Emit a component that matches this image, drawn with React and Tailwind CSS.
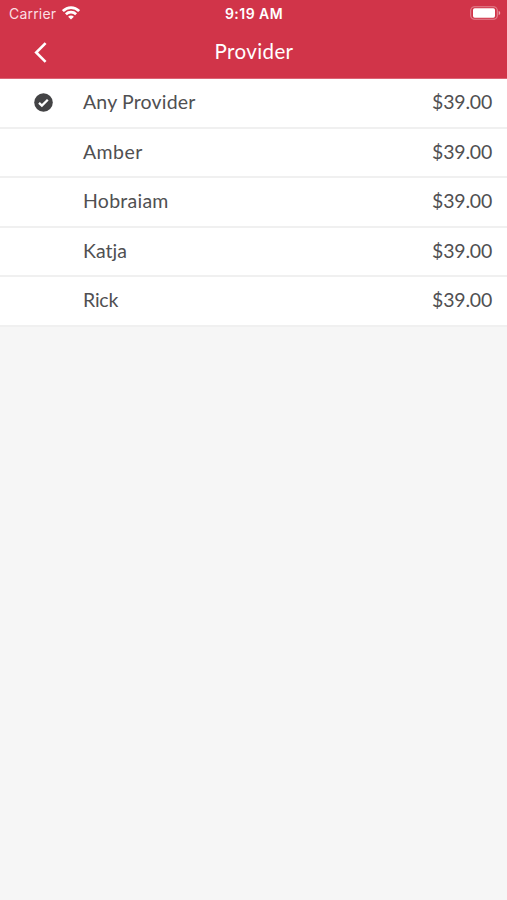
const providers = [
  { name: 'Any Provider', price: '$39.00', selected: true, spacing: 'tracking-[0.17px]' },
  { name: 'Amber', price: '$39.00', spacing: 'tracking-[0.45px]' },
  { name: 'Hobraiam', price: '$39.00', spacing: 'tracking-[0.25px]' },
  { name: 'Katja', price: '$39.00', spacing: 'tracking-[0.05px]' },
  { name: 'Rick', price: '$39.00', spacing: 'tracking-[-0.2px]' },
];

function Wifi() {
  return (
    <svg className="mb-[1px] ml-[6px] h-[14px] w-[18px]" viewBox="0 0 18 14" fill="none" stroke="#fff" strokeWidth="2.7">
      <path d="M.9 5.1C5.5.5 12.5.5 17.1 5.1" />
      <path d="M3.9 8.2c2.9-2.8 7.3-2.8 10.2 0" />
      <path d="M9 13.6 6.1 10.7c1.6-1.5 4.2-1.5 5.8 0Z" fill="#fff" stroke="none" />
    </svg>
  );
}

function Battery() {
  return (
    <svg className="mb-[1px] h-[14px] w-[31px]" viewBox="0 0 31 14">
      <rect x=".7" y=".7" width="26.6" height="12.6" rx="3.8" fill="none" stroke="#fff" strokeOpacity=".4" strokeWidth="1.1" />
      <rect x="3" y="2.3" width="22" height="9.4" rx="1.7" fill="#fff" />
      <path d="M28.7 4.9c2 .7 2 3.5 0 4.2Z" fill="#fff" fillOpacity=".55" />
    </svg>
  );
}

function Check() {
  return (
    <svg className="h-[19px] w-[19px]" viewBox="0 0 19 19">
      <circle cx="9.5" cy="9.5" r="9.3" fill="#434345" />
      <path d="m5 9.8 2.9 2.8 5.9-5.8" fill="none" stroke="#fff" strokeWidth="2.3" />
    </svg>
  );
}

export default function App() {
  return (
    <div className="flex h-[900px] w-full flex-col overflow-hidden bg-[#f6f6f6] font-['Lato',sans-serif] text-[#505052]">
      <header className="h-[79px] shrink-0 border-b border-[#dc6475] bg-[#d13449] text-white">
        <div className="grid h-[27px] grid-cols-[1fr_80px_1fr] items-center pr-[6px] pl-[9px] font-['Inter',sans-serif]">
          <div className="flex items-center text-[14px] leading-[27px] text-[#fbdfe3]">
            <span className="tracking-[0.2px]">Carrier</span>
            <Wifi />
          </div>
          <div className="-ml-[2px] text-center text-[14px] leading-[27px] font-semibold tracking-[0.45px]">9:19 AM</div>
          <div className="flex justify-end"><Battery /></div>
        </div>
        <div className="grid h-[51px] grid-cols-[83px_1fr_83px] items-center">
          <button className="pl-[34px]" aria-label="Back">
            <svg className="h-[21px] w-[13px]" viewBox="0 0 13 21" fill="none" stroke="#fff" strokeWidth="2.6">
              <path d="M11.6 1.2 2.2 10.5l9.4 9.3" />
            </svg>
          </button>
          <h1 className="pb-[3px] pl-[1px] text-center text-[20.5px] leading-[28px] font-normal tracking-[0.4px]">Provider</h1>
        </div>
      </header>
      <main className="flex h-[247.5px] flex-col bg-white">
        {providers.map((p) => (
          <div key={p.name} className="flex flex-1 items-center border-b-2 border-[#f0f0f0] pr-[15px]">
            <div className="w-[83px] pl-[33.5px]">{p.selected && <Check />}</div>
            <div className={'flex-1 pb-[1px] text-[19.5px] leading-[28px] ' + p.spacing}>{p.name}</div>
            <div className="pb-[1px] text-[19.5px] leading-[28px] tracking-[-0.2px]">{p.price}</div>
          </div>
        ))}
      </main>
    </div>
  );
}
